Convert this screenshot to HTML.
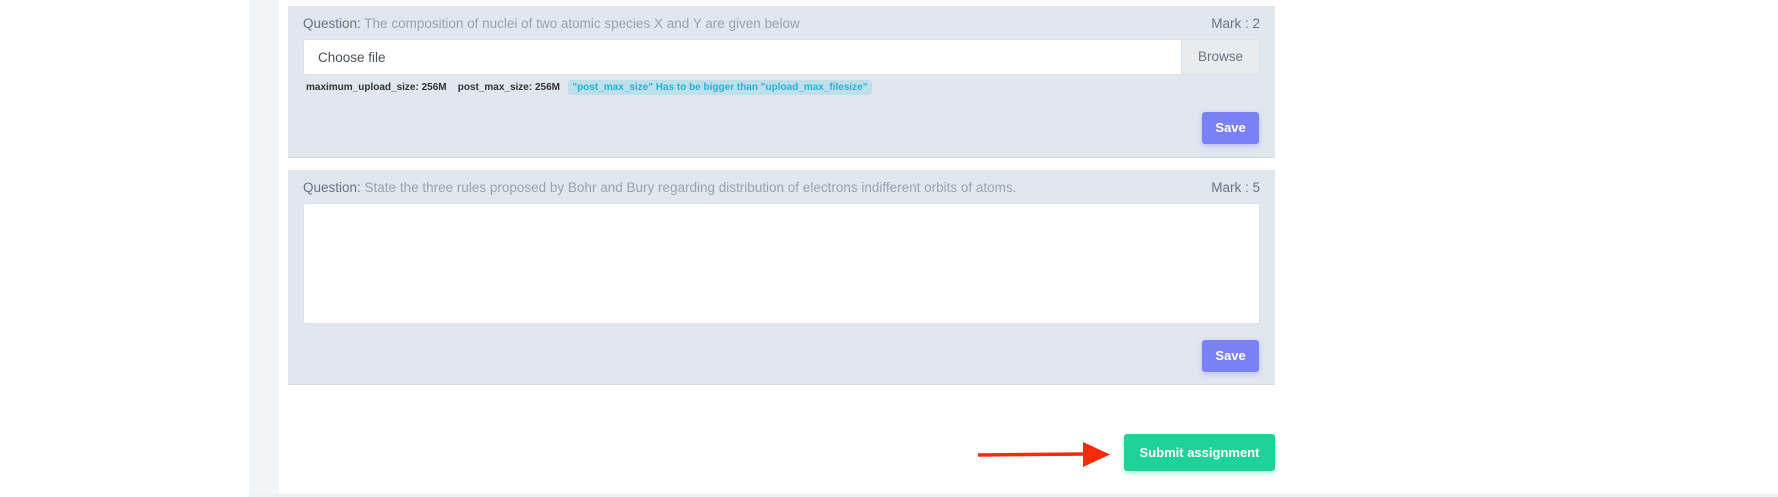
<!DOCTYPE html>
<html><head><style>
body{margin:0;width:1778px;height:497px;background:#fff;font-family:"Liberation Sans",sans-serif;position:relative;overflow:hidden}
.side{position:absolute;left:249px;top:0;width:30px;height:497px;background:#f3f4f8}
.bot{position:absolute;left:249px;top:494px;width:1529px;height:3px;background:#f1f2f6}
.panel{position:absolute;left:288px;width:987px;background:#e1e7ef;border-bottom:1px solid #d5dbe3}
.q{position:absolute;left:15px;font-size:13.5px;color:#9aa3ad}
.q b{font-weight:normal;color:#6b7480}
.mark{position:absolute;right:15px;font-size:13.5px;color:#6b7480}
.save{position:absolute;right:16px;width:57px;height:32px;background:#7a80f5;color:#fff;border-radius:3px;font-size:13px;font-weight:bold;text-align:center;line-height:32px;box-shadow:0 2px 6px rgba(122,128,245,.4)}
</style></head><body>
<div class="side"></div>
<div class="panel" style="top:6px;height:151px">
 <div class="q" style="top:10px"><b>Question:</b> The composition of nuclei of two atomic species X and Y are given below</div>
 <div class="mark" style="top:10px">Mark : 2</div>
 <div style="position:absolute;left:15px;top:33px;width:957px;height:36px;background:#fff;border:1px solid #dde2e8;border-radius:3px;box-sizing:border-box">
  <span style="position:absolute;left:14px;top:10px;font-size:13.5px;color:#495057">Choose file</span>
  <div style="position:absolute;right:0;top:0;width:77px;height:34px;background:#e9ecef;border-left:1px solid #dde2e8;font-size:13.5px;color:#6b7480;text-align:center;line-height:34px">Browse</div>
 </div>
 <div style="position:absolute;left:18px;top:76px;font-size:10px;font-weight:bold;color:#333">maximum_upload_size: 256M&nbsp;&nbsp;&nbsp;&nbsp;post_max_size: 256M&nbsp;&nbsp;&nbsp;<span style="background:#bfe0ea;color:#2ab0d5;padding:2px 4px;border-radius:3px">"post_max_size" Has to be bigger than "upload_max_filesize"</span></div>
 <div class="save" style="top:106px">Save</div>
</div>
<div class="panel" style="top:170px;height:214px">
 <div class="q" style="top:10px"><b>Question:</b> State the three rules proposed by Bohr and Bury regarding distribution of electrons indifferent orbits of atoms.</div>
 <div class="mark" style="top:10px">Mark : 5</div>
 <div style="position:absolute;left:15px;top:33px;width:957px;height:121px;background:#fff;border:1px solid #dde2e8;border-radius:3px;box-sizing:border-box"></div>
 <div class="save" style="top:170px">Save</div>
</div>
<svg style="position:absolute;left:975px;top:440px" width="140" height="30"><line x1="3" y1="15" x2="110" y2="14" stroke="#f52a0c" stroke-width="3.5"/><polygon points="108,2 135,14.5 108,27" fill="#f52a0c"/></svg>
<div style="position:absolute;left:1124px;top:434px;width:151px;height:37px;background:#20d198;border-radius:3px;color:#fff;font-size:13px;font-weight:bold;text-align:center;line-height:37px;box-shadow:0 2px 6px rgba(32,209,152,.35)">Submit assignment</div>
<div class="bot"></div>
</body></html>
